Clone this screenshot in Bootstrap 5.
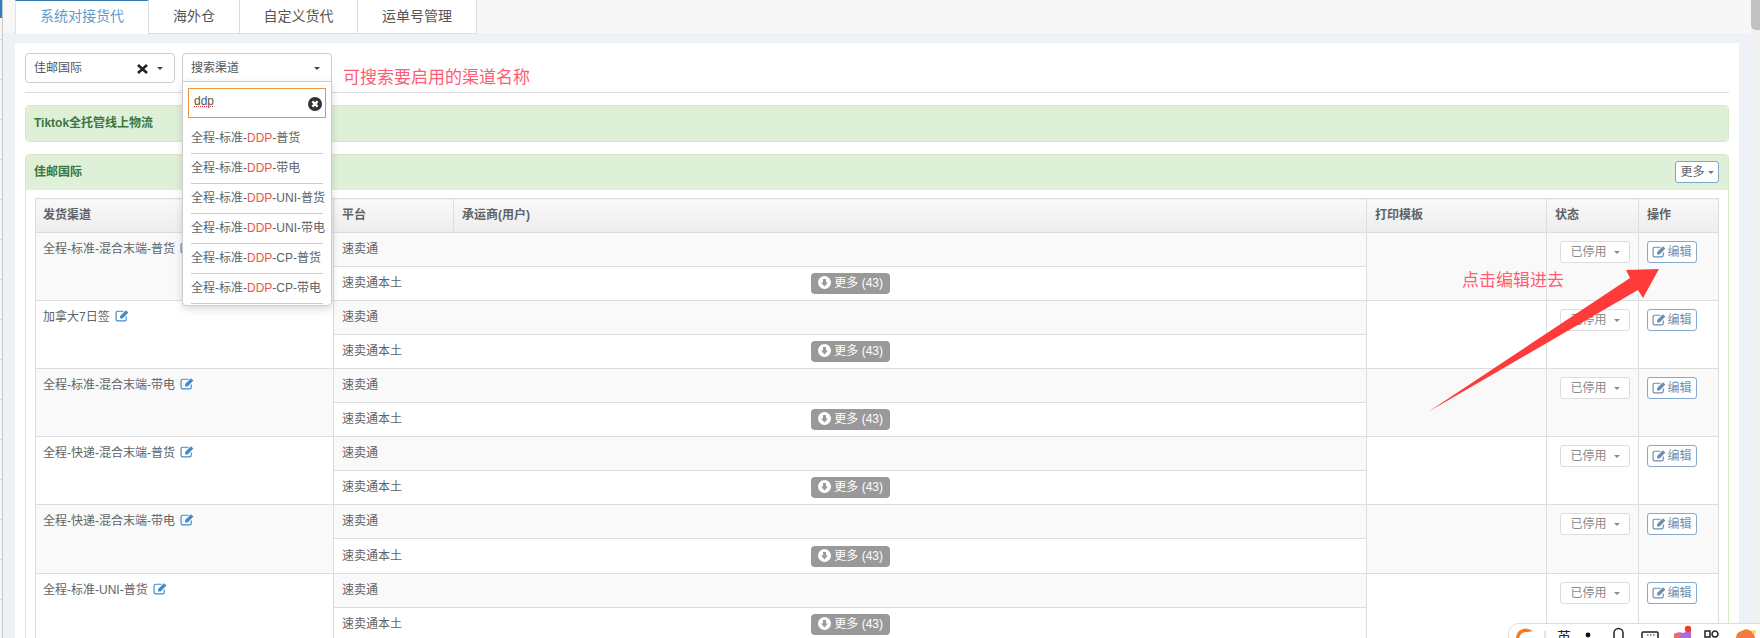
<!DOCTYPE html>
<html lang="zh-CN">
<head>
  <meta charset="UTF-8">
  <meta name="viewport" content="width=device-width, initial-scale=1.0">
  <title>物流设置</title>
  <link href="https://cdn.jsdelivr.net/npm/bootstrap@5.3.0/dist/css/bootstrap.min.css" rel="stylesheet">
  <style>
    html, body { height: 638px; overflow: hidden; }
    body {
      position: relative;
      background-color: #eef1f6;
      color: #606366;
      font-family: "Liberation Sans", "Noto Sans CJK SC", sans-serif;
      font-size: 12px;
      line-height: 17px;
    }
    .edge-strip {
      width: 3px;
      flex-shrink: 0;
      border-right: 1px solid #c8c8c8;
      background: linear-gradient(#2f7fc1 18px, transparent 18px),
        repeating-linear-gradient(#f5f5f5 0 39px, #d8d8d8 39px 40px);
    }
    .scroll-rail { width: 10px; flex-shrink: 0; background-color: #f1f1f1; }
    .scroll-thumb { height: 30px; background-color: #c1c1c1; border-radius: 0 0 0 5px; }

    .tab-strip {
      height: 33px;
      padding-left: 13px;
      background-color: #f7f7f7;
      border-bottom: 0;
      flex-wrap: nowrap;
    }
    .tab-strip .nav-link {
      height: 34px;
      margin: 0 0 0 -1px;
      padding: 7px 0 0;
      text-align: center;
      font-size: 14px;
      line-height: 18px;
      color: #555;
      background-color: #fff;
      border: 1px solid #ddd;
      border-top: 0;
      border-radius: 0;
    }
    .tab-strip .nav-link.active {
      color: #5c9ccc;
      border-top: 1px solid #337ab7;
      border-bottom: 0;
      padding-top: 6px;
    }
    .tab-w1 { width: 134px; }
    .tab-w2 { width: 92px; }
    .tab-w3 { width: 119px; }
    .tab-w4 { width: 120px; }

    .sheet {
      margin: 10px 12px 0 12px;
      padding: 10px;
      height: 600px;
      background-color: #fff;
    }
    .pick-box {
      position: relative;
      width: 150px;
      height: 30px;
      padding: 6px 8px;
      border: 1px solid #ccc;
      border-radius: 4px;
      background-color: #fff;
      color: #555;
    }
    .pick-box.is-open { height: 29px; border-radius: 4px 4px 0 0; }
    .pick-caret {
      position: absolute;
      top: 13px;
      right: 11px;
      border-top: 3px solid #444;
      border-left: 3px solid transparent;
      border-right: 3px solid transparent;
    }
    .pick-clear { position: absolute; top: 10px; right: 26px; width: 11px; height: 10px; }
    .pick-wrap { position: relative; width: 150px; margin-left: -1px; }
    .pick-menu {
      display: block;
      position: absolute;
      top: 28px;
      left: 0;
      width: 150px;
      height: 225px;
      min-width: 0;
      padding: 6px 0 0;
      margin: 0;
      font-size: 12px;
      border: 1px solid #ccc;
      border-radius: 0 0 4px 4px;
      box-shadow: 0 3px 8px rgba(0, 0, 0, .15);
      z-index: 10;
    }
    .pick-search { position: relative; margin: 0 5px 6px; }
    .pick-search input {
      height: 30px;
      padding: 0 24px 4px 5px;
      font-size: 12px;
      color: #555;
      border: 1px solid #f0923b;
      border-radius: 0;
      box-shadow: none;
      text-decoration: underline dotted #e33;
    }
    .pick-search svg { position: absolute; top: 9px; right: 4px; width: 14px; height: 14px; }
    .pick-item {
      height: 30px;
      margin: 0 8px;
      padding: 6px 0 0;
      border-bottom: 1px solid #ccc;
      white-space: nowrap;
      color: #606366;
    }
    .pick-item em { font-style: normal; color: #e8573f; }
    .note-text { font-size: 17px; line-height: 18px; color: #ff5b77; }
    .note-search { margin: 16px 0 0 3px; height: 14px; }
    .note-edit { position: absolute; left: 1462px; top: 272px; z-index: 5; }
    .point-arrow { position: absolute; left: 1420px; top: 260px; z-index: 6; }
    .head-rule { margin: 9px 0 12px; border-top: 1px solid #ddd; opacity: 1; }

    .green-box { border: 1px solid #d6e9c6; border-radius: 4px; }
    .green-box + .green-box { margin-top: 12px; }
    .green-head {
      background-color: #dff0d8;
      color: #3c763d;
      font-weight: 700;
      padding: 9px 8px 0;
      border: 0;
    }
    .green-head.single { height: 35px; border-radius: 4px; }
    .green-head.with-btn { height: 35px; padding: 6px 9px 0 8px; }
    .green-head.with-btn > span { margin-top: 3px; }
    .green-body { padding: 8px 9px; }
    .more-btn {
      width: 44px;
      height: 22px;
      padding: 0;
      font-size: 12px;
      line-height: 18px;
      color: #606366;
      background-color: #fff;
      border: 1px solid #7da7cc;
      border-radius: 3px;
    }
    .tiny-caret {
      display: inline-block;
      margin-left: 3px;
      vertical-align: 2px;
      border-top: 3px solid #777;
      border-left: 3px solid transparent;
      border-right: 3px solid transparent;
    }

    .rule-table { width: 1683px; table-layout: fixed; margin: 0; font-size: 12px; border-color: #ddd; }
    .rule-table > :not(caption) > * > * {
      padding: 8px;
      color: #606366;
      line-height: 17px;
      border-color: #ddd;
    }
    .rule-table > thead > tr > th:first-child,
    .rule-table > tbody > tr > td.channel-cell { padding-left: 7px; }
    .rule-table thead th {
      height: 34px;
      font-weight: 700;
      background: linear-gradient(#f9f9f9, #ededed);
      --bs-table-bg: transparent;
    }
    .rule-table tbody tr { height: 34px; }
    .rule-table tbody td { vertical-align: top; }
    .rule-table tbody tr.tall-row { height: 35px; }
    .rule-table td.tint { --bs-table-bg: #f9f9f9; background-color: #f9f9f9; }
    .rule-table td.platform-cell { vertical-align: middle; padding-top: 0; padding-bottom: 0; }
    .rule-table td.status-cell { padding: 8px 0 0 13px; }
    .rule-table td.action-cell { padding: 8px 0 0 8px; }
    .edit-ico { width: 15px; height: 13px; vertical-align: -2px; }
    .channel-edit { margin-left: 5px; color: #428bca; vertical-align: -1px; }
    .status-btn {
      width: 70px;
      height: 22px;
      padding: 0;
      font-size: 12px;
      line-height: 19px;
      color: #8a8a8a;
      background-color: #fff;
      border: 1px solid #ddd;
      border-radius: 3px;
    }
    .status-btn .tiny-caret { margin-left: 7px; border-top-color: #8a8a8a; }
    .action-btn {
      width: 50px;
      height: 22px;
      padding: 0;
      font-size: 12px;
      line-height: 18px;
      color: #6c8fb0;
      background-color: #fff;
      border: 1px solid #86a9c9;
      border-radius: 3px;
      white-space: nowrap;
    }
    .count-tag {
      display: inline-block;
      width: 79px;
      height: 21px;
      margin: 0 0 0 409px;
      padding: 3px 0 0 0;
      font-size: 12px;
      line-height: 15px;
      font-weight: 400;
      color: #fff;
      background-color: #999;
      border-radius: 4px;
      vertical-align: middle;
    }
    .count-tag svg { width: 13px; height: 13px; vertical-align: -2px; }
    .ime-bar { position: absolute; right: 0; bottom: 0; z-index: 8; }
  </style>
</head>
<body class="d-flex">
  <svg width="0" height="0" class="position-absolute">
    <symbol id="ico-edit" viewBox="0 0 14 12">
      <path d="M10.500 7v2.500A1.500 1.500 0 0 1 9 11H2.500A1.500 1.500 0 0 1 1 9.500V3.500A1.500 1.500 0 0 1 2.500 2H8" fill="none" stroke="currentColor" stroke-width="1.100"/>
      <path d="M4.800 6.400 10.200 1l2.300 2.300L7.100 8.700H4.800z" fill="currentColor"/>
    </symbol>
    <symbol id="ico-down" viewBox="0 0 13 13">
      <circle cx="6.500" cy="6.500" r="6.500" fill="#fff"/>
      <path d="M5 3h3v3.400h2L6.500 10.400 3 6.400h2z" fill="#999"/>
    </symbol>
  </svg>

  <div class="edge-strip"></div>

  <div class="flex-grow-1">
    <ul class="nav nav-tabs tab-strip">
      <li class="nav-item"><a class="nav-link active tab-w1" href="#">系统对接货代</a></li>
      <li class="nav-item"><a class="nav-link tab-w2" href="#">海外仓</a></li>
      <li class="nav-item"><a class="nav-link tab-w3" href="#">自定义货代</a></li>
      <li class="nav-item"><a class="nav-link tab-w4" href="#">运单号管理</a></li>
    </ul>

    <div class="sheet">
      <div class="d-flex gap-2">
        <div class="pick-box">佳邮国际
          <svg class="pick-clear" viewBox="0 0 11 10"><path d="M1 1l9 8M10 1 1 9" stroke="#222" stroke-width="2.600"/></svg>
          <span class="pick-caret"></span>
        </div>
        <div class="pick-wrap">
          <div class="pick-box is-open">搜索渠道<span class="pick-caret"></span></div>
          <div class="dropdown-menu pick-menu">
            <div class="pick-search">
              <input class="form-control" type="text" value="ddp" spellcheck="false">
              <svg viewBox="0 0 14 14"><circle cx="7" cy="7" r="7" fill="#333"/><path d="M4.400 4.400l5.200 5.200M9.600 4.400 4.400 9.600" stroke="#fff" stroke-width="2.200"/></svg>
            </div>
            <div class="pick-item">全程-标准-<em>DDP</em>-普货</div>
            <div class="pick-item">全程-标准-<em>DDP</em>-带电</div>
            <div class="pick-item">全程-标准-<em>DDP</em>-UNI-普货</div>
            <div class="pick-item">全程-标准-<em>DDP</em>-UNI-带电</div>
            <div class="pick-item">全程-标准-<em>DDP</em>-CP-普货</div>
            <div class="pick-item">全程-标准-<em>DDP</em>-CP-带电</div>
          </div>
        </div>
        <div class="note-text note-search">可搜索要启用的渠道名称</div>
      </div>
      <hr class="head-rule">

      <div class="green-box">
        <div class="green-head single">Tiktok全托管线上物流</div>
      </div>

      <div class="green-box">
        <div class="green-head with-btn d-flex justify-content-between">
          <span>佳邮国际</span>
          <button class="btn more-btn" type="button">更多<span class="tiny-caret"></span></button>
        </div>
        <div class="green-body">
          <table class="table table-bordered rule-table">
            <colgroup>
              <col style="width:298px"><col style="width:120px"><col style="width:913px">
              <col style="width:180px"><col style="width:92px"><col style="width:80px">
            </colgroup>
            <thead>
              <tr><th>发货渠道</th><th>平台</th><th>承运商(用户)</th><th>打印模板</th><th>状态</th><th>操作</th></tr>
            </thead>
            <tbody id="ruleRows"></tbody>
          </table>
        </div>
      </div>
    </div>
  </div>

  <div class="scroll-rail"><div class="scroll-thumb"></div></div>

  <div class="note-text note-edit">点击编辑进去</div>
  <svg class="point-arrow" width="250" height="160" viewBox="0 0 250 160">
    <polygon points="8,152 210,18 206,10 239,9 223,38 218,30" fill="#ff3a3a"/>
  </svg>

  <svg class="ime-bar" width="252" height="15" viewBox="0 0 252 15">
    <rect x=".5" y=".5" width="270" height="40" rx="10" fill="#fff" stroke="#ddd"/>
    <path d="M11 15q2-7 9-6l5-1q-8-5-14 0-3 3-3 7z" fill="#f57a1c"/>
    <path d="M37 8v7" stroke="#ccc"/>
    <text x="49" y="19" font-size="14" fill="#222" font-family="'Noto Sans CJK SC',sans-serif">英</text>
    <circle cx="80" cy="12" r="2.400" fill="#111"/>
    <path d="M106 15v-5a4.500 4.500 0 0 1 9 0v5" fill="none" stroke="#222" stroke-width="1.500"/>
    <path d="M134 15v-5q0-1 1-1h14q1 0 1 1v5" fill="none" stroke="#222" stroke-width="1.500"/>
    <path d="M139 12h1.500M142 12h1.500M145 12h1.500" stroke="#222"/>
    <path d="M166 15v-4q5-3 9-1l8-3v8z" fill="#b36ad0"/>
    <path d="M166 15v-4q3-2 6-1v5z" fill="#ef6a6a"/>
    <circle cx="180" cy="6" r="3.200" fill="#f03a2e"/>
    <path d="M197 8h5v6h-5zM207 8a3 3 0 1 0 .01 0z" fill="none" stroke="#222" stroke-width="1.500"/>
    <path d="M228 15q0-6 6-7 3-3 7-1 5 1 6 8z" fill="#f57a3c"/>
    <circle cx="246" cy="9" r="2" fill="#ffd84a"/>
  </svg>

  <script>
    // 渠道列表，每个渠道两行平台
    const channels = [
      '全程-标准-混合末端-普货',
      '加拿大7日签',
      '全程-标准-混合末端-带电',
      '全程-快递-混合末端-普货',
      '全程-快递-混合末端-带电',
      '全程-标准-UNI-普货'
    ];
    const editIcon = cls => `<svg class="edit-ico ${cls}"><use href="#ico-edit"></use></svg>`;

    document.getElementById('ruleRows').innerHTML = channels.map((name, i) => {
      const tint = i % 2 === 0 ? 'tint' : '';
      const tall = i === 4 ? 'tall-row' : '';
      return `<tr>
          <td rowspan="2" class="channel-cell ${tint}">${name}${editIcon('channel-edit')}</td>
          <td colspan="2" class="platform-cell tint">速卖通</td>
          <td rowspan="2" class="${tint}"></td>
          <td rowspan="2" class="status-cell ${tint}"><button class="btn status-btn" type="button">已停用<span class="tiny-caret"></span></button></td>
          <td rowspan="2" class="action-cell ${tint}"><button class="btn action-btn" type="button">${editIcon('')}编辑</button></td>
        </tr>
        <tr class="${tall}">
          <td colspan="2" class="platform-cell">速卖通本土<span class="badge count-tag"><svg><use href="#ico-down"></use></svg> 更多 (43)</span></td>
        </tr>`;
    }).join('');
  </script>
  <script src="https://cdn.jsdelivr.net/npm/bootstrap@5.3.0/dist/js/bootstrap.bundle.min.js"></script>
</body>
</html>
